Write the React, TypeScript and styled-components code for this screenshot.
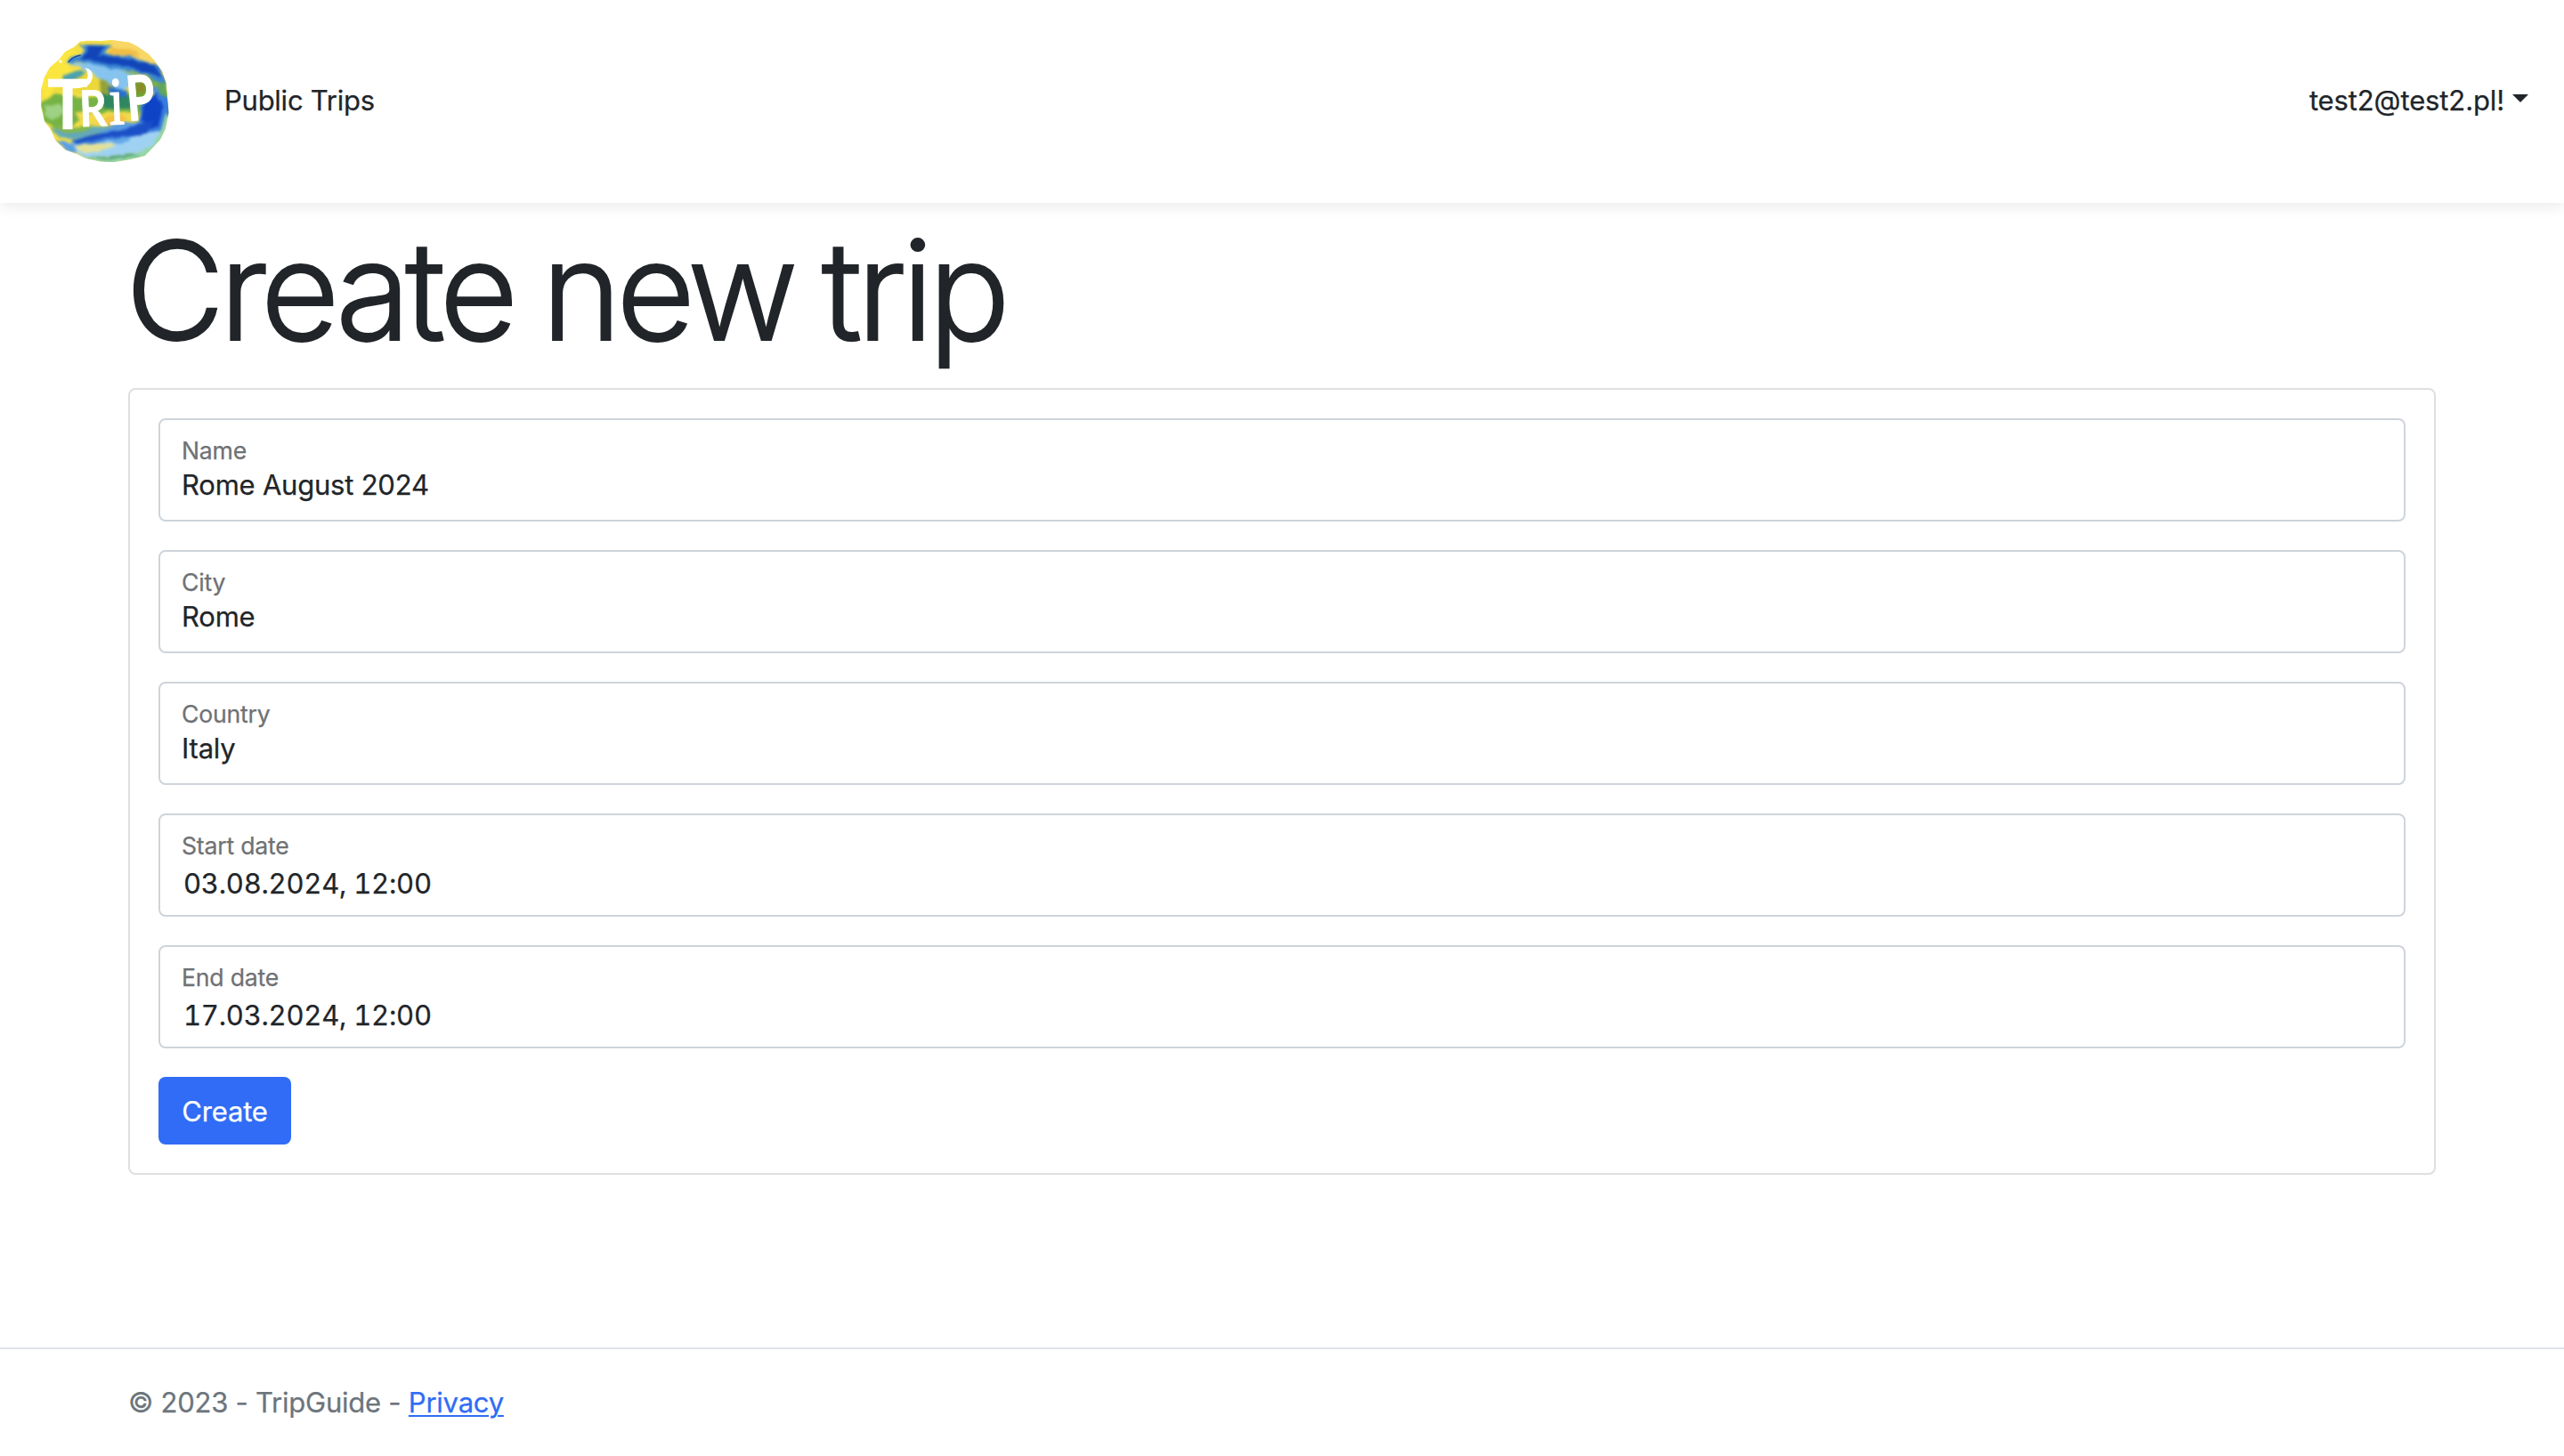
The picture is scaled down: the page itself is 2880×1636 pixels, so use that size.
import React from "react";
import styled, { createGlobalStyle } from "styled-components";

const GlobalStyle = createGlobalStyle`
  *, *::before, *::after { box-sizing: border-box; }
  body {
    margin: 0;
    background: #fff;
    color: #212529;
    font-family: Inter, "Liberation Sans", sans-serif;
    font-size: 31px;
    line-height: 48px;
    -webkit-text-stroke: 0.25px currentColor;
  }
`;

const Page = styled.div`
  display: flex;
  flex-direction: column;
  height: 1636px;
`;

const Header = styled.header`
  display: flex;
  align-items: center;
  flex: none;
  height: 228px;
  padding: 0 40px 0 30px;
  background: #fff;
  box-shadow: 0 5px 14px rgba(0, 0, 0, 0.075);
`;

const NavLink = styled.a<{ $spacing: number }>`
  display: flex;
  align-items: center;
  color: #212529;
  text-decoration: none;
  white-space: nowrap;
  letter-spacing: ${(p) => p.$spacing}px;
`;

const Nav = styled.nav`
  display: flex;
  flex: 1;
  justify-content: space-between;
  padding: 0 0 2px 42px;
`;

const Caret = styled.span`
  margin: 0 0 5px 9px;
  border-top: 9.6px solid #212529;
  border-left: 9px solid transparent;
  border-right: 9px solid transparent;
`;

const Main = styled.main`
  flex: 1;
  padding: 0 144px;
`;

const Title = styled.h1`
  margin: 0;
  padding: 3px 0 0;
  height: 208px;
  font-size: 153px;
  font-weight: 300;
  line-height: 192px;
  letter-spacing: -6px;
  word-spacing: -5px;
  text-indent: -3px;
  white-space: nowrap;
  -webkit-text-stroke: 1.8px currentColor;
`;

const Card = styled.form`
  display: flex;
  flex-direction: column;
  align-items: stretch;
  gap: 32px;
  padding: 32px;
  border: 2px solid #dfdfdf;
  border-radius: 8px;
`;

const Field = styled.label`
  display: flex;
  flex-direction: column;
  height: 116px;
  padding: 17px 24px 0;
  border: 2px solid #ced4da;
  border-radius: 8px;
`;

const Caption = styled.span`
  color: #6f7174;
  font-size: 26.6px;
  line-height: 34px;
  letter-spacing: -0.2px;
`;

const Value = styled.span<{ $date?: boolean }>`
  padding: ${(p) => (p.$date ? "6px 0 0 2px" : "2px 0 0")};
  line-height: 40px;
  letter-spacing: ${(p) => (p.$date ? "-0.24px" : "-0.22px")};
  font-variant-numeric: ${(p) => (p.$date ? "tabular-nums" : "normal")};
`;

const Submit = styled.button`
  align-self: flex-start;
  width: 149px;
  height: 76px;
  padding: 1px 0 0;
  border: 0;
  border-radius: 8px;
  background: #306cf5;
  color: #fff;
  font: inherit;
  letter-spacing: -0.2px;
`;

const Footer = styled.footer`
  flex: none;
  height: 122px;
  padding: 36px 144px 0;
  border-top: 2px solid #dee2e6;
  color: #6c757d;
  white-space: nowrap;
  letter-spacing: -0.24px;
`;

const PrivacyLink = styled.a`
  color: #306cf5;
  text-decoration: underline;
  text-decoration-thickness: 2px;
  text-underline-offset: 3px;
`;

const LogoSvg = styled.svg`
  flex: none;
  width: 180px;
  height: 170px;
`;

function Logo() {
  return (
    <LogoSvg viewBox="0 -3 540 510" role="img" aria-label="Trip">
      <defs>
        <clipPath id="globe">
          <path d="M180 50 L205 47 L250 48 L285 45 L345 53 L372 66 L410 92 L428 112 L456 150 L470 190 L474 240 L479 290 L467 345 L450 380 L418 415 L398 435 L350 447 L290 457 L245 454 L200 444 L170 430 L130 415 L98 385 L80 345 L60 318 L49 270 L48 215 L60 170 L78 138 L110 110 L130 85 L160 68 Z" />
        </clipPath>
        <filter id="wash" x="-5%" y="-5%" width="110%" height="110%" colorInterpolationFilters="sRGB">
          <feTurbulence type="fractalNoise" baseFrequency="0.03" numOctaves="3" seed="4" result="n" />
          <feDisplacementMap in="SourceGraphic" in2="n" scale="16" xChannelSelector="R" yChannelSelector="G" />
          <feGaussianBlur stdDeviation="4" />
        </filter>
      </defs>
      <g clipPath="url(#globe)">
        <rect x="30" y="30" width="470" height="440" fill="#f5df45" />
        <g filter="url(#wash)">
          <path d="M30 130 L120 60 L180 90 L140 140 L250 200 L60 240 Z" fill="#fbe640" />
          <path d="M280 40 L420 40 L460 150 L300 100 Z" fill="#f8d766" />
          <path d="M285 68 L370 82 L385 102 L270 92 Z" fill="#f1bd45" />
          <path d="M180 60 L290 62 L258 92 L350 100 L450 135 L480 230 L400 160 L280 140 L170 118 L135 122 L150 105 L195 85 Z" fill="#3b86d4" />
          <path d="M205 64 L270 66 L238 96 L330 105 L430 130 L458 170 L330 132 L200 112 L178 108 L205 88 Z" fill="#1245b8" />
          <path d="M140 120 L220 125 L330 148 L420 190 L350 200 L300 230 L260 190 L210 150 Z" fill="#86c4ef" />
          <path d="M310 145 L400 165 L470 200 L480 240 L430 210 L380 170 Z" fill="#79b04a" />
          <path d="M395 185 L440 205 L455 228 L425 225 L400 205 Z" fill="#4f93d6" />
          <path d="M120 165 L190 145 L206 158 L180 180 L130 182 Z" fill="#4ba0ae" />
          <path d="M200 155 L250 180 L300 215 L270 235 L180 225 L120 220 L70 225 Z" fill="#ecd83a" />
          <path d="M245 175 L300 205 L300 240 L250 225 Z" fill="#94a23c" />
          <path d="M40 260 L100 225 L190 240 L350 225 L400 250 L370 310 L200 310 L120 350 L60 320 Z" fill="#76b345" />
          <path d="M60 265 L110 260 L125 290 L90 315 L60 300 Z" fill="#9fd184" />
          <path d="M245 225 L340 230 L350 275 L260 280 Z" fill="#2f8660" />
          <path d="M275 200 L340 215 L335 240 L280 230 Z" fill="#2a70c8" />
          <path d="M165 285 L230 290 L370 285 L350 325 L180 335 Z" fill="#f2da4c" />
          <path d="M230 325 L310 290 L340 310 L300 335 Z" fill="#f5c244" />
          <path d="M350 190 L380 175 L410 200 L400 240 L350 245 Z" fill="#72a337" />
          <path d="M375 190 L398 195 L394 220 L374 225 Z" fill="#8d8a25" />
          <path d="M440 195 L465 190 L480 260 L452 235 Z" fill="#5fa65c" />
          <path d="M385 265 L440 220 L490 250 L480 380 L390 420 L250 400 L160 400 L150 385 L270 360 L380 320 Z" fill="#3a7cdb" />
          <path d="M395 265 L435 225 L462 270 L440 335 L385 350 L388 300 Z" fill="#0f43c6" />
          <path d="M330 325 L430 320 L400 365 L280 372 L165 393 L160 383 L270 350 Z" fill="#1b4fc6" />
          <path d="M210 352 L330 322 L400 322 L330 345 L250 358 Z" fill="#5a9be2" />
          <path d="M80 340 L130 355 L220 340 L300 330 L250 355 L170 380 L110 375 Z" fill="#62a9ba" />
          <path d="M75 335 L165 340 L230 330 L200 352 L130 360 Z" fill="#84b74e" />
          <path d="M100 385 L170 398 L300 385 L440 350 L462 365 L410 430 L190 440 Z" fill="#9fd2f2" />
          <path d="M240 385 L340 372 L350 385 L300 392 Z" fill="#64a8e8" />
          <path d="M95 380 L160 398 L170 425 L130 415 Z" fill="#5a9fe6" />
          <path d="M160 402 L220 392 L305 398 L270 415 L190 428 Z" fill="#e4e298" />
          <path d="M170 436 L260 442 L370 425 L430 395 L470 290 L492 330 L430 440 L280 470 Z" fill="#96d6ab" />
          <path d="M190 442 L360 430 L390 434 L300 447 Z" fill="#5ba573" />
        </g>
        <path d="M140 120 Q156 100 182 96" fill="none" stroke="#1a49a8" strokeWidth="4" />
        <circle cx="114" cy="117" r="5" fill="#fff" />
      </g>
      <g fill="#fff" stroke="#fff" strokeLinejoin="round" fontFamily="Lato, sans-serif" fontWeight="700">
        <path d="M150 192 C185 194 207 186 206 162 Q205 148 196 139 Q223 142 222 168 C219 201 194 208 150 208 Z" stroke="none" />
        <text transform="translate(70 344) scale(.98 1)" fontSize="232" strokeWidth="2">T</text>
        <text transform="translate(179 337) rotate(-2) scale(.86 1)" fontSize="168" strokeWidth="2">R</text>
        <text transform="translate(280 329) rotate(-2) scale(.8 1)" fontFamily="Liberation Serif, serif" fontWeight="400" fontSize="230" strokeWidth="5">i</text>
        <text transform="translate(342 317) rotate(-5) scale(.74 1)" fontSize="208" strokeWidth="4">P</text>
      </g>
    </LogoSvg>
  );
}

interface FieldData {
  caption: string;
  value: string;
  date?: boolean;
}

const fields: FieldData[] = [
  { caption: "Name", value: "Rome August 2024" },
  { caption: "City", value: "Rome" },
  { caption: "Country", value: "Italy" },
  { caption: "Start date", value: "03.08.2024, 12:00", date: true },
  { caption: "End date", value: "17.03.2024, 12:00", date: true },
];

export default function App() {
  return (
    <Page>
      <GlobalStyle />
      <Header>
        <Logo />
        <Nav>
          <NavLink $spacing={-0.25}>Public Trips</NavLink>
          <NavLink $spacing={-0.12}>
            test2@test2.pl!
            <Caret />
          </NavLink>
        </Nav>
      </Header>
      <Main>
        <Title>Create new trip</Title>
        <Card>
          {fields.map((f) => (
            <Field key={f.caption}>
              <Caption>{f.caption}</Caption>
              <Value $date={f.date}>{f.value}</Value>
            </Field>
          ))}
          <Submit type="button">Create</Submit>
        </Card>
      </Main>
      <Footer>
        © 2023 - TripGuide - <PrivacyLink>Privacy</PrivacyLink>
      </Footer>
    </Page>
  );
}
